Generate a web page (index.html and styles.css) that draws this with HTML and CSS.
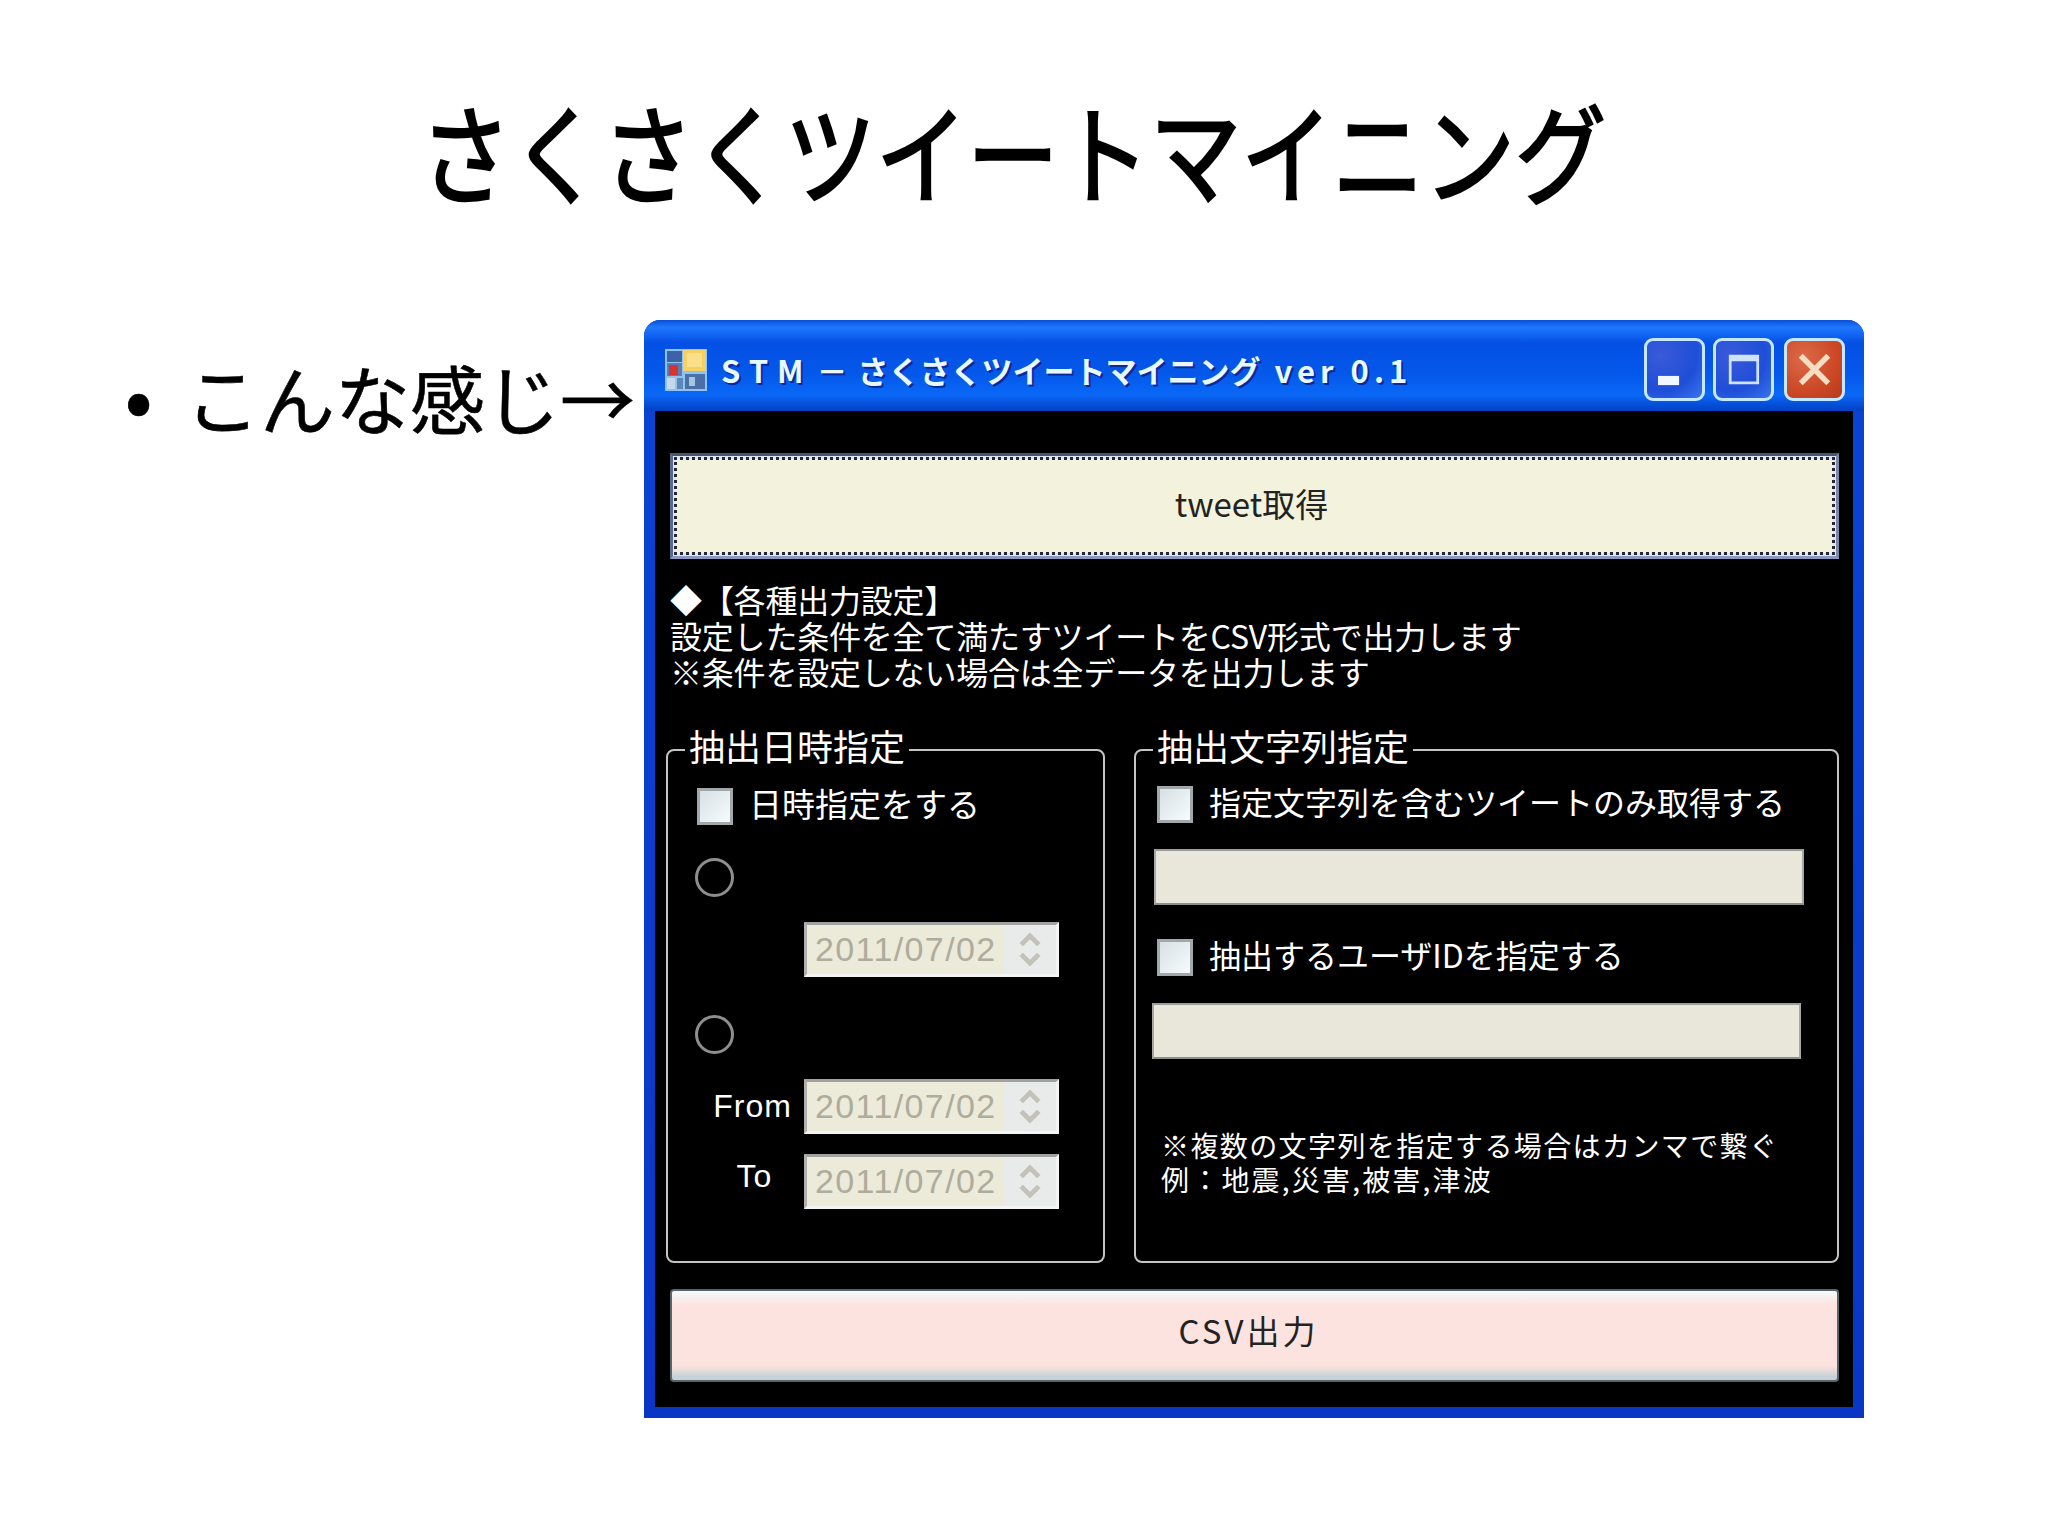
FILE: index.html
```html
<!DOCTYPE html>
<html lang="ja">

<head>
    <meta charset="UTF-8">
    <title>さくさくツイートマイニング</title>
    <link rel="stylesheet" href="styles.css">
</head>

<body>
    <h1 class="slide-title">さくさくツイートマイニング</h1>

    <div class="slide-body">
        <div class="point">
            <span class="bullet">•</span>
            <span class="point-text">こんな感じ→</span>
        </div>

        <!-- アプリのウィンドウ -->
        <div class="window">
            <div class="titlebar">
                <svg class="app-icon" viewBox="0 0 42 42">
                    <rect width="42" height="42" fill="#8fc4ee" />
                    <rect x="2" y="2" width="15" height="11" fill="#3d62a8" />
                    <rect x="18" y="1" width="23" height="21" fill="#f7cf62" />
                    <rect x="22" y="4" width="15" height="14" fill="#fbe08c" />
                    <rect x="2" y="14" width="15" height="13" fill="#5a7db8" />
                    <rect x="4" y="16" width="9" height="10" fill="#d8322c" />
                    <rect x="2" y="29" width="8" height="11" fill="#c6d8ea" />
                    <rect x="12" y="29" width="6" height="11" fill="#5f86b8" />
                    <rect x="20" y="25" width="20" height="15" fill="#4a70a8" />
                    <rect x="24" y="28" width="6" height="9" fill="#a9c4de" />
                </svg>
                <span class="window-name"><span class="latin">STM</span><span class="dash">－</span>さくさくツイートマイニング<span class="latin latin-ver">ver 0.1</span></span>
                <div class="controls">
                    <span class="control">
                        <svg viewBox="0 0 60 60"><rect x="12" y="37" width="23" height="10" fill="#f2f6ff" /></svg>
                    </span>
                    <span class="control">
                        <svg viewBox="0 0 60 60"><path d="M14 14H47V46H14Z M17 21V43H44V21Z" fill="#cfe2ff" fill-rule="evenodd" /></svg>
                    </span>
                    <span class="control control-close">
                        <svg viewBox="0 0 60 60"><path d="M15 15L45 45M45 15L15 45" stroke="#f6dcc0" stroke-width="6" fill="none" /></svg>
                    </span>
                </div>
            </div>

            <div class="window-content">
                <button class="btn btn-get">tweet取得</button>

                <p class="intro">
                    ◆【各種出力設定】<br>
                    設定した条件を全て満たすツイートをCSV形式で出力します<br>
                    ※条件を設定しない場合は全データを出力します
                </p>

                <div class="groups">
                    <fieldset class="group group-date">
                        <legend>抽出日時指定</legend>
                        <label class="check-row">
                            <span class="checkbox"></span>日時指定をする
                        </label>
                        <span class="radio radio-first"></span>
                        <div class="date-row date-single">
                            <div class="date-input">
                                <span class="date-value">2011/07/02</span>
                                <span class="spinner">
                                    <svg viewBox="0 0 30 40"><path d="M6 15L15 6L24 15M6 25L15 34L24 25" stroke="#c2c2b8" stroke-width="5" fill="none" /></svg>
                                </span>
                            </div>
                        </div>
                        <span class="radio radio-second"></span>
                        <div class="date-row date-from">
                            <span class="date-label">From</span>
                            <div class="date-input">
                                <span class="date-value">2011/07/02</span>
                                <span class="spinner">
                                    <svg viewBox="0 0 30 40"><path d="M6 15L15 6L24 15M6 25L15 34L24 25" stroke="#c2c2b8" stroke-width="5" fill="none" /></svg>
                                </span>
                            </div>
                        </div>
                        <div class="date-row date-to">
                            <span class="date-label date-label-to">To</span>
                            <div class="date-input">
                                <span class="date-value">2011/07/02</span>
                                <span class="spinner">
                                    <svg viewBox="0 0 30 40"><path d="M6 15L15 6L24 15M6 25L15 34L24 25" stroke="#c2c2b8" stroke-width="5" fill="none" /></svg>
                                </span>
                            </div>
                        </div>
                    </fieldset>

                    <fieldset class="group group-text">
                        <legend>抽出文字列指定</legend>
                        <label class="check-row">
                            <span class="checkbox"></span>指定文字列を含むツイートのみ取得する
                        </label>
                        <div class="text-input text-input-first"></div>
                        <label class="check-row check-row-second">
                            <span class="checkbox"></span>抽出するユーザIDを指定する
                        </label>
                        <div class="text-input text-input-second"></div>
                        <p class="note">
                            ※複数の文字列を指定する場合はカンマで繋ぐ<br>
                            <span class="note-example">例：地震,災害,被害,津波</span>
                        </p>
                    </fieldset>
                </div>

                <button class="btn btn-csv">CSV出力</button>
            </div>
        </div>
    </div>
</body>

</html>
```

FILE: styles.css
```css
* {
    box-sizing: border-box;
}

body {
    margin: 0;
    width: 2048px;
    height: 1535px;
    overflow: hidden;
    background-color: #fff;
    color: #000;
    font-family: "Noto Sans CJK JP", "Noto Sans", sans-serif;
}

/* スライド部分 */
.slide-title {
    width: 2026px;
    height: 320px;
    margin: 0;
    padding-top: 84px;
    font-size: 108px;
    font-weight: 400;
    line-height: 130px;
    text-align: center;
    white-space: nowrap;
    transform: scaleX(0.845);
    -webkit-text-stroke: 2.5px #000;
}

.slide-body {
    display: flex;
    padding-left: 125px;
}

.point {
    display: flex;
    width: 519px;
    padding-top: 31px;
    font-size: 75px;
    line-height: 92px;
    -webkit-text-stroke: 0.6px #000;
}

.bullet {
    width: 60px;
    margin-top: -2px;
    font-size: 72px;
    font-weight: 700;
}

.point-text {
    white-space: nowrap;
}

/* ウィンドウ */
.window {
    display: flex;
    flex-direction: column;
    width: 1220px;
    height: 1098px;
    padding: 0 11px 11px;
    border-radius: 16px 16px 0 0;
    background: linear-gradient(#0a44d4, #0a36c6);
}

.titlebar {
    display: flex;
    align-items: center;
    flex: none;
    height: 91px;
    margin: 0 -11px;
    padding: 8px 19px 0 21px;
    border-radius: 16px 16px 0 0;
    background: linear-gradient(#0a4fd8 0, #1f78ff 8%, #0450e4 25%, #0458ea 60%, #0a68f6 82%, #0340c4 100%);
}

.app-icon {
    flex: none;
    width: 42px;
    height: 42px;
}

.window-name {
    margin-left: 14px;
    color: #e8f8ff;
    font-size: 31px;
    font-weight: 700;
    white-space: nowrap;
    text-shadow: 2px 2px 0 #0a2a9a;
}

.window-name .latin {
    letter-spacing: 9px;
}

.window-name .dash {
    margin: 0 10px 0 4px;
}

.window-name .latin-ver {
    margin-left: 14px;
    letter-spacing: 5px;
}

.controls {
    display: flex;
    gap: 8px;
    margin-left: auto;
}

.control {
    width: 61px;
    height: 63px;
    border: 3px solid #c4e8ff;
    border-radius: 9px;
    background: radial-gradient(circle at 25% 25%, #3a5ad8, #1f4ed8 60%, #3a74ee);
}

.control svg {
    display: block;
    width: 100%;
    height: 100%;
}

.control-close {
    margin-left: 2px;
    background: radial-gradient(circle at 30% 30%, #dc6a48, #cc4826 60%, #b83a1c);
}

.window-content {
    flex: 1;
    padding: 42px 0 0 11px;
    background-color: #000;
}

.btn {
    display: block;
    width: 1169px;
    margin-left: 4px;
    padding: 0 6px 0 0;
    color: #222;
    font-family: inherit;
    font-size: 33px;
}

.btn-get {
    height: 106px;
    padding-bottom: 7px;
    border: 3px solid;
    border-color: #45566e #7b88a8 #8a98c4 #5a6a8c;
    background-color: #f3f2dc;
    box-shadow: inset 0 0 0 3px #dfe6f4;
    outline: 3px dotted #23253a;
    outline-offset: -7px;
}

.btn-csv {
    height: 93px;
    margin-top: 26px;
    padding-right: 12px;
    padding-bottom: 12px;
    border: 2px solid #56666c;
    border-radius: 4px;
    background: linear-gradient(#f4fafa 0, #fde3df 16%, #fde3df 84%, #c6d2d6 96%);
    letter-spacing: 3px;
}

.intro {
    margin: 22px 0 0 4px;
    color: #fff;
    font-size: 32px;
    letter-spacing: -0.2px;
    line-height: 36px;
}

.groups {
    display: grid;
    grid-template-columns: 439px 705px;
    column-gap: 29px;
    margin-top: 38px;
}

/* グループボックス */
.group {
    height: 536px;
    min-width: 0;
    margin: 0;
    border: 2px solid #c4c4c4;
    border-radius: 8px;
    color: #fff;
    font-size: 33px;
}

.group legend {
    padding: 0 4px 10px;
    font-size: 36px;
    line-height: 36px;
}

.group-date {
    padding: 15px 0 0 29px;
}

.group-date legend {
    margin-left: -12px;
}

.group-text {
    padding: 13px 0 0 21px;
    font-size: 32px;
}

.group-text legend {
    margin-left: -4px;
}

.check-row {
    display: flex;
    align-items: flex-start;
    height: 37px;
    line-height: 30px;
    white-space: nowrap;
}

.checkbox {
    flex: none;
    width: 36px;
    height: 37px;
    margin-right: 16px;
    border: 3px solid #a2a8aa;
    background: linear-gradient(135deg, #d8e0e6, #f6fcfd);
}

.check-row-second {
    margin-top: 34px;
}

.radio {
    display: block;
    width: 39px;
    height: 39px;
    margin-left: -2px;
    border: 3px solid #8e8e8e;
    border-radius: 50%;
}

.radio-first {
    margin-top: 33px;
}

.radio-second {
    margin-top: 38px;
}

.date-row {
    display: flex;
    align-items: center;
}

.date-single {
    margin: 25px 0 0 107px;
}

.date-from {
    margin-top: 25px;
}

.date-to {
    margin-top: 20px;
}

.date-label {
    width: 107px;
    padding-left: 4px;
    font-family: "Liberation Sans", sans-serif;
    font-size: 32px;
    letter-spacing: 1px;
    text-align: center;
}

.date-label-to {
    padding-left: 8px;
    padding-bottom: 10px;
}

.date-input {
    display: flex;
    align-items: center;
    justify-content: space-between;
    width: 255px;
    height: 55px;
    padding-left: 8px;
    border: 3px solid;
    border-color: #a2a2a0 #f4f4f4 #f4f4f4 #b0b0ae;
    background-color: #ecead9;
    color: #aeac9c;
    font-family: "Liberation Sans", sans-serif;
    font-size: 34px;
}

.date-value {
    letter-spacing: 1.4px;
}

.spinner {
    width: 52px;
    height: 49px;
    padding: 5px 11px;
    background-color: #e9ebea;
}

.spinner svg {
    display: block;
    width: 100%;
    height: 100%;
}

.text-input {
    height: 56px;
    border: 2px solid;
    border-color: #9c9c98 #a8a8a4 #8e8e8a #a8a8a4;
    background-color: #e9e7d9;
}

.text-input-first {
    width: 650px;
    margin: 26px 0 0 -3px;
}

.text-input-second {
    width: 649px;
    margin: 27px 0 0 -5px;
}

.note {
    margin: 69px 0 0 4px;
    font-size: 28px;
    letter-spacing: 1.4px;
    line-height: 34px;
    white-space: nowrap;
}

.note-example {
    letter-spacing: 2.2px;
}
```
